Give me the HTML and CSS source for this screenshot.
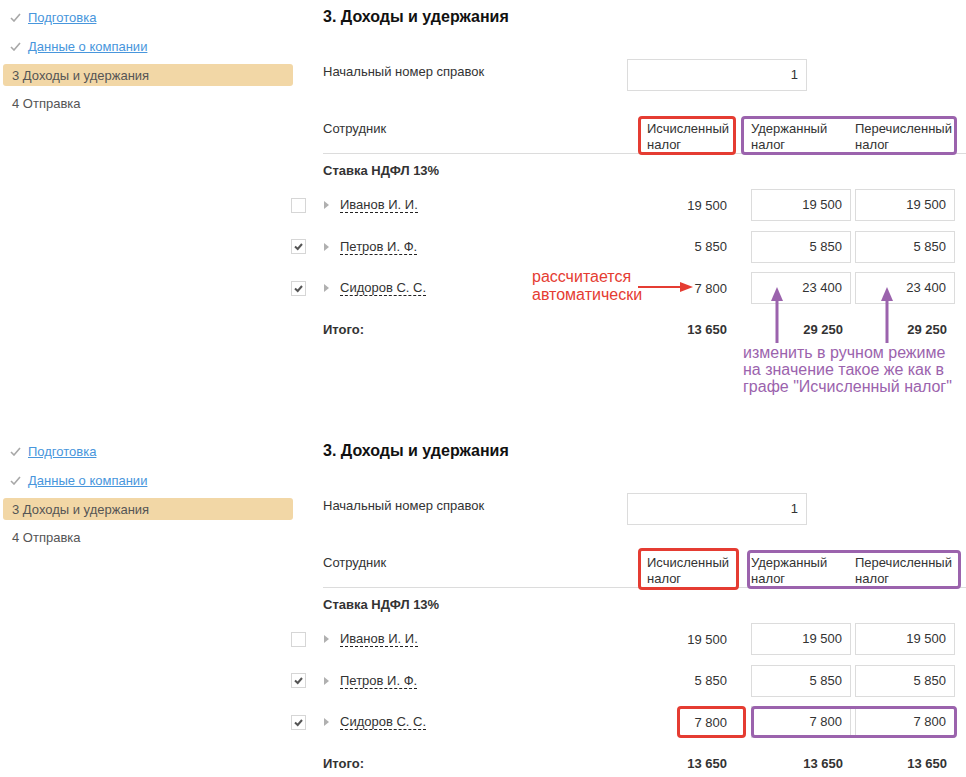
FILE: index.html
```html
<!DOCTYPE html>
<html lang="ru">
<head>
  <meta charset="UTF-8" />
  <title>Доходы и удержания</title>
  <link rel="stylesheet" href="styles.css">
</head>
<body>

  <!-- Первый экран: до исправления -->
  <div class="panel">
    <nav class="steps">
      <div class="step done">
        <svg class="tick" width="11" height="9" viewBox="0 0 11 9"><path d="M1 5 L4 8 L10 1" fill="none" stroke="#a8a8a8" stroke-width="1.6"/></svg>
        <a href="#">Подготовка</a>
      </div>
      <div class="step done">
        <svg class="tick" width="11" height="9" viewBox="0 0 11 9"><path d="M1 5 L4 8 L10 1" fill="none" stroke="#a8a8a8" stroke-width="1.6"/></svg>
        <a href="#">Данные о компании</a>
      </div>
      <div class="step active">3 Доходы и удержания</div>
      <div class="step">4 Отправка</div>
    </nav>

    <div class="content">
      <h1>3. Доходы и удержания</h1>

      <div class="start-row">
        <div class="start-label">Начальный номер справок</div>
        <div class="field start-field">1</div>
      </div>

      <div class="head-row">
        <div>Сотрудник</div>
        <div class="calc-head">Исчисленный<br>налог</div>
        <div>Удержанный<br>налог</div>
        <div>Перечисленный<br>налог</div>
      </div>

      <div class="group">Ставка НДФЛ 13%</div>

      <div class="rows">
        <div class="row">
          <span class="check"></span>
          <div class="name"><span class="arrow"></span><span class="who">Иванов И. И.</span></div>
          <div class="calc">19 500</div>
          <div class="field">19 500</div>
          <div class="field">19 500</div>
        </div>
        <div class="row">
          <span class="check on"><svg width="13" height="13" viewBox="0 0 13 13"><path d="M3 6.5 L5.7 9 L10 4" fill="none" stroke="#555" stroke-width="2"/></svg></span>
          <div class="name"><span class="arrow"></span><span class="who">Петров И. Ф.</span></div>
          <div class="calc">5 850</div>
          <div class="field">5 850</div>
          <div class="field">5 850</div>
        </div>
        <div class="row">
          <span class="check on"><svg width="13" height="13" viewBox="0 0 13 13"><path d="M3 6.5 L5.7 9 L10 4" fill="none" stroke="#555" stroke-width="2"/></svg></span>
          <div class="name"><span class="arrow"></span><span class="who">Сидоров С. С.</span></div>
          <div class="calc">7 800</div>
          <div class="field">23 400</div>
          <div class="field">23 400</div>
        </div>
      </div>

      <div class="row total">
        <span></span>
        <div>Итого:</div>
        <div class="calc">13 650</div>
        <div class="sum">29 250</div>
        <div class="sum">29 250</div>
      </div>
    </div>

    <!-- пометки поверх скриншота -->
    <div class="mark red head-calc"></div>
    <div class="mark purple head-paid"></div>

    <div class="note red-note">рассчитается<br>автоматически</div>
    <svg class="red-arrow" width="56" height="12" viewBox="0 0 56 12">
      <line x1="0" y1="6" x2="44" y2="6" stroke="#e53c32" stroke-width="2"/>
      <path d="M42 1 L55 6 L42 11 Z" fill="#e53c32"/>
    </svg>
    <svg class="up-arrow first" width="14" height="56" viewBox="0 0 14 56">
      <line x1="7" y1="10" x2="7" y2="56" stroke="#9b63ad" stroke-width="3"/>
      <path d="M1 14 L7 0 L13 14 Z" fill="#9b63ad"/>
    </svg>
    <svg class="up-arrow second" width="14" height="56" viewBox="0 0 14 56">
      <line x1="7" y1="10" x2="7" y2="56" stroke="#9b63ad" stroke-width="3"/>
      <path d="M1 14 L7 0 L13 14 Z" fill="#9b63ad"/>
    </svg>
    <div class="note purple-note">изменить в ручном режиме<br>на значение такое же как в<br>графе "Исчисленный налог"</div>
  </div>

  <!-- Второй экран: после исправления -->
  <div class="panel last">
    <nav class="steps">
      <div class="step done">
        <svg class="tick" width="11" height="9" viewBox="0 0 11 9"><path d="M1 5 L4 8 L10 1" fill="none" stroke="#a8a8a8" stroke-width="1.6"/></svg>
        <a href="#">Подготовка</a>
      </div>
      <div class="step done">
        <svg class="tick" width="11" height="9" viewBox="0 0 11 9"><path d="M1 5 L4 8 L10 1" fill="none" stroke="#a8a8a8" stroke-width="1.6"/></svg>
        <a href="#">Данные о компании</a>
      </div>
      <div class="step active">3 Доходы и удержания</div>
      <div class="step">4 Отправка</div>
    </nav>

    <div class="content">
      <h1>3. Доходы и удержания</h1>

      <div class="start-row">
        <div class="start-label">Начальный номер справок</div>
        <div class="field start-field">1</div>
      </div>

      <div class="head-row">
        <div>Сотрудник</div>
        <div class="calc-head">Исчисленный<br>налог</div>
        <div>Удержанный<br>налог</div>
        <div>Перечисленный<br>налог</div>
      </div>

      <div class="group">Ставка НДФЛ 13%</div>

      <div class="rows">
        <div class="row">
          <span class="check"></span>
          <div class="name"><span class="arrow"></span><span class="who">Иванов И. И.</span></div>
          <div class="calc">19 500</div>
          <div class="field">19 500</div>
          <div class="field">19 500</div>
        </div>
        <div class="row">
          <span class="check on"><svg width="13" height="13" viewBox="0 0 13 13"><path d="M3 6.5 L5.7 9 L10 4" fill="none" stroke="#555" stroke-width="2"/></svg></span>
          <div class="name"><span class="arrow"></span><span class="who">Петров И. Ф.</span></div>
          <div class="calc">5 850</div>
          <div class="field">5 850</div>
          <div class="field">5 850</div>
        </div>
        <div class="row">
          <span class="check on"><svg width="13" height="13" viewBox="0 0 13 13"><path d="M3 6.5 L5.7 9 L10 4" fill="none" stroke="#555" stroke-width="2"/></svg></span>
          <div class="name"><span class="arrow"></span><span class="who">Сидоров С. С.</span></div>
          <div class="calc">7 800</div>
          <div class="field">7 800</div>
          <div class="field">7 800</div>
        </div>
      </div>

      <div class="row total">
        <span></span>
        <div>Итого:</div>
        <div class="calc">13 650</div>
        <div class="sum">13 650</div>
        <div class="sum">13 650</div>
      </div>
    </div>

    <div class="mark red head-calc2"></div>
    <div class="mark purple head-paid2"></div>
    <div class="mark red row-calc"></div>
    <div class="mark purple row-paid"></div>
  </div>

</body>
</html>
```

FILE: styles.css
```css
body {
  margin: 0;
  font-family: "Liberation Sans", Arial, sans-serif;
  font-size: 13px;
  color: #333;
  background: #fff;
}

.panel {
  position: relative;
  display: flex;
  height: 434px;
  overflow: hidden;
}

.panel.last {
  height: 343px;
}

/* steps on the left */
.steps {
  width: 291px;
  flex-shrink: 0;
  padding-top: 6px;
}

.step {
  display: flex;
  align-items: center;
  width: 290px;
  height: 22px;
  margin: 0 0 7px 3px;
  padding-left: 9px;
  box-sizing: border-box;
  color: #555;
  border-radius: 3px;
}

.step:nth-child(3) {
  margin-bottom: 6px;
}

.step .tick {
  margin: 0 7px 0 -2px;
}

.step a {
  color: #4896dc;
  text-decoration: underline;
}

.step.active {
  background: #f2d7a6;
}

/* main column */
.content {
  flex: 1;
}

h1 {
  margin: 0;
  padding: 8px 0 0 32px;
  font-size: 16px;
  line-height: 18px;
  color: #111;
}

.start-row {
  display: flex;
  margin-top: 33px;
  padding-left: 32px;
}

.start-label {
  width: 304px;
  padding-top: 5px;
  line-height: 16px;
}

.field {
  width: 100px;
  height: 32px;
  box-sizing: border-box;
  border: 1px solid #dcdcdc;
  padding-right: 8px;
  line-height: 30px;
  text-align: right;
  background: #fff;
}

.start-field {
  width: 180px;
  padding-right: 8px;
}

.head-row {
  display: grid;
  grid-template-columns: 314px 114px 104px 100px;
  height: 32px;
  margin: 30px 0 0 32px;
  line-height: 16px;
  border-bottom: 1px solid #dcdcdc;
}

.calc-head {
  padding-left: 10px;
}

.group {
  margin-top: 7px;
  padding-left: 32px;
  font-weight: bold;
  line-height: 20px;
}

.rows {
  display: flex;
  flex-direction: column;
  gap: 9.5px;
  margin-top: 8px;
}

.row {
  display: grid;
  grid-template-columns: 32px 314px 114px 104px 100px;
  align-items: center;
  height: 32px;
}

.check {
  display: flex;
  align-items: center;
  justify-content: center;
  width: 15px;
  height: 15px;
  box-sizing: border-box;
  border: 1px solid #d6d6d6;
}

.name {
  display: flex;
  align-items: center;
}

.arrow {
  width: 0;
  height: 0;
  margin: 0 11px 0 1px;
  border-top: 4px solid transparent;
  border-bottom: 4px solid transparent;
  border-left: 5px solid #b0b0b0;
}

.who {
  line-height: 15px;
  border-bottom: 1px dashed #222;
}

.calc {
  padding-right: 24px;
  text-align: right;
}

.total {
  height: 20px;
  margin-top: 15px;
  font-weight: bold;
}

.sum {
  width: 100px;
  padding-right: 8px;
  box-sizing: border-box;
  text-align: right;
}

/* annotations */
.mark {
  position: absolute;
  box-sizing: border-box;
  border: 3px solid;
  border-radius: 4px;
}

.mark.red {
  border-color: #e53c32;
}

.mark.purple {
  border-color: #9b63ad;
}

.head-calc {
  left: 638px;
  top: 116px;
  width: 98px;
  height: 39px;
}

.head-paid {
  left: 741px;
  top: 116px;
  width: 216px;
  height: 39px;
}

.head-calc2 {
  left: 638px;
  top: 114px;
  width: 101px;
  height: 42px;
}

.head-paid2 {
  left: 747px;
  top: 116px;
  width: 214px;
  height: 39px;
}

.row-calc {
  left: 677px;
  top: 272px;
  width: 69px;
  height: 32px;
}

.row-paid {
  left: 751px;
  top: 272px;
  width: 206px;
  height: 32px;
}

.note {
  position: absolute;
  font-size: 16px;
}

.red-note {
  left: 532px;
  top: 268px;
  line-height: 18px;
  color: #e53c32;
}

.red-arrow {
  position: absolute;
  left: 638px;
  top: 281px;
}

.up-arrow {
  position: absolute;
  top: 287px;
}

.up-arrow.first {
  left: 770px;
}

.up-arrow.second {
  left: 880px;
}

.purple-note {
  left: 743px;
  top: 344px;
  line-height: 17px;
  color: #9b63ad;
}
```
